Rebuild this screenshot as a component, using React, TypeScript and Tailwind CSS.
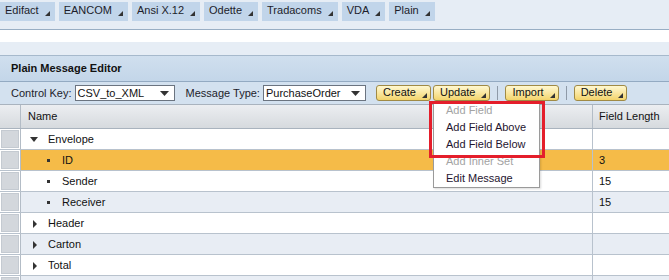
import type { ReactNode } from "react";

const TABS = ["Edifact", "EANCOM", "Ansi X.12", "Odette", "Tradacoms", "VDA", "Plain"];

type Row = { label: string; kind: "open" | "closed" | "leaf" | "none"; len?: string; sel?: boolean };

const ROWS: Row[] = [
  { label: "Envelope", kind: "open" },
  { label: "ID", kind: "leaf", len: "3", sel: true },
  { label: "Sender", kind: "leaf", len: "15" },
  { label: "Receiver", kind: "leaf", len: "15" },
  { label: "Header", kind: "closed" },
  { label: "Carton", kind: "closed" },
  { label: "Total", kind: "closed" },
  { label: "", kind: "none" },
];

const MENU = [
  { label: "Add Field", off: true },
  { label: "Add Field Above" },
  { label: "Add Field Below" },
  { label: "Add Inner Set", off: true },
  { label: "Edit Message" },
];

const Corner = () => (
  <svg width="5" height="5" viewBox="0 0 5 5" className="mb-[1px] ml-[6px] shrink-0" aria-hidden>
    <polygon points="5,0 5,5 0,5" fill="#333" />
  </svg>
);

const SelectArrow = () => (
  <svg width="9" height="5" viewBox="0 0 9 5" aria-hidden>
    <polygon points="0,0 9,0 4.5,5" fill="#333" />
  </svg>
);

function YellowButton({ children }: { children: ReactNode }) {
  return (
    <div className="flex h-[16px] items-end rounded-[3px] border border-[#a08a45] bg-gradient-to-b from-[#fff8cf] to-[#f3d46a] pb-[1px] pl-[6px] pr-[3px] leading-[13px] text-[#111]">
      <span>{children}</span>
      <Corner />
    </div>
  );
}

function Select({ value, width }: { value: string; width: string }) {
  return (
    <div className={`flex h-[16px] items-center justify-between border border-[#6b7480] bg-white pl-[2px] pr-[5px] leading-[14px] ${width}`}>
      <span className="text-[#111]">{value}</span>
      <SelectArrow />
    </div>
  );
}

function TreeMark({ kind }: { kind: Row["kind"] }) {
  if (kind === "open")
    return (
      <svg width="8" height="5" viewBox="0 0 8 5" className="ml-[9px] mr-[10px]" aria-hidden>
        <polygon points="0,0 8,0 4,5" fill="#333" />
      </svg>
    );
  if (kind === "closed")
    return (
      <svg width="4" height="8" viewBox="0 0 4 8" className="ml-[12px] mr-[11px]" aria-hidden>
        <polygon points="0,0 4,4 0,8" fill="#333" />
      </svg>
    );
  if (kind === "leaf") return <span className="ml-[26px] mr-[12px] h-[3px] w-[3px] bg-[#333]" />;
  return null;
}

export default function App() {
  return (
    <div className="relative h-[280px] w-[669px] overflow-hidden bg-white font-['Liberation_Sans',Arial,sans-serif] text-[11px] text-[#1d1d2b]">
      {/* tab strip */}
      <div className="flex h-[29px] gap-[4px] bg-[#e6edf5] pt-[2px]">
        {TABS.map((t) => (
          <div key={t} className="flex h-[19px] items-end bg-[#c1d5ea] pb-[4px] pl-[5px] pr-[5px] leading-[13px]">
            <span>{t}</span>
            <Corner />
          </div>
        ))}
      </div>
      <div className="h-[1px] bg-[#98aec4]" />
      <div className="h-[12px] bg-white" />
      <div className="h-[13px] bg-[#e6edf5]" />
      <div className="h-[1px] bg-[#a6b9cc]" />

      {/* panel title */}
      <div className="flex h-[25px] items-center bg-gradient-to-b from-[#d0dfee] to-[#c3d6e9] pl-[11px] font-bold text-[#111]">
        Plain Message Editor
      </div>
      <div className="h-[1px] bg-[#93aac2]" />

      {/* toolbar */}
      <div className="flex h-[22px] items-center bg-[#d3e1ef] pl-[11px]">
        <span className="mr-[3px]">Control Key:</span>
        <Select value="CSV_to_XML" width="w-[100px]" />
        <span className="ml-[11px] mr-[3px]">Message Type:</span>
        <Select value="PurchaseOrder" width="w-[103px]" />
        <div className="ml-[10px]">
          <YellowButton>Create</YellowButton>
        </div>
        <div className="ml-[2px]">
          <YellowButton>Update</YellowButton>
        </div>
        <div className="mx-[7px] h-[14px] w-[1px] bg-[#8e9aa8]" />
        <YellowButton>Import</YellowButton>
        <div className="mx-[7px] h-[14px] w-[1px] bg-[#8e9aa8]" />
        <YellowButton>Delete</YellowButton>
      </div>

      {/* table header */}
      <div className="flex h-[25px] border-y border-[#a9b3be] bg-gradient-to-b from-[#eceef1] to-[#d6dade]">
        <div className="w-[21px] border-r border-[#b3bcc6]" />
        <div className="flex w-[572px] items-center border-r border-[#b3bcc6] pl-[7px] text-[#111]">Name</div>
        <div className="flex flex-1 items-center pl-[6px] text-[#111]">Field Length</div>
      </div>

      {/* rows */}
      {ROWS.map((r, i) => {
        const bg = r.sel ? "bg-[#f5bb48]" : i % 2 === 0 ? "bg-white" : "bg-[#e8edf4]";
        return (
          <div key={i} className={`flex h-[21px] border-b border-[#b8c2cd] ${bg}`}>
            <div className="w-[21px] border-r border-[#b3bcc6] bg-white p-[1px]">
              <div className="h-full border border-[#c4cad1] bg-[#d3d7dc]" />
            </div>
            <div className="flex w-[572px] items-center border-r border-[#b8c2cd] pt-[1px] text-[#111]">
              <TreeMark kind={r.kind} />
              <span>{r.label}</span>
            </div>
            <div className="flex flex-1 items-center pt-[1px] pl-[6px] text-[#111]">{r.len}</div>
          </div>
        );
      })}

      {/* dropdown menu */}
      <div className="absolute left-[433px] top-[101px] w-[107px] border border-[#9a9a9a] bg-white shadow-[1px_1px_2px_rgba(0,0,0,0.15)]">
        {MENU.map((m) => (
          <div key={m.label} className={`h-[17px] pl-[12px] leading-[17px] ${m.off ? "text-[#a3a3a3]" : "text-[#1f1530]"}`}>
            {m.label}
          </div>
        ))}
      </div>

      {/* highlight */}
      <div className="absolute left-[429px] top-[101px] h-[57px] w-[116px] border-[3px] border-[#e41e2b]" />
    </div>
  );
}
